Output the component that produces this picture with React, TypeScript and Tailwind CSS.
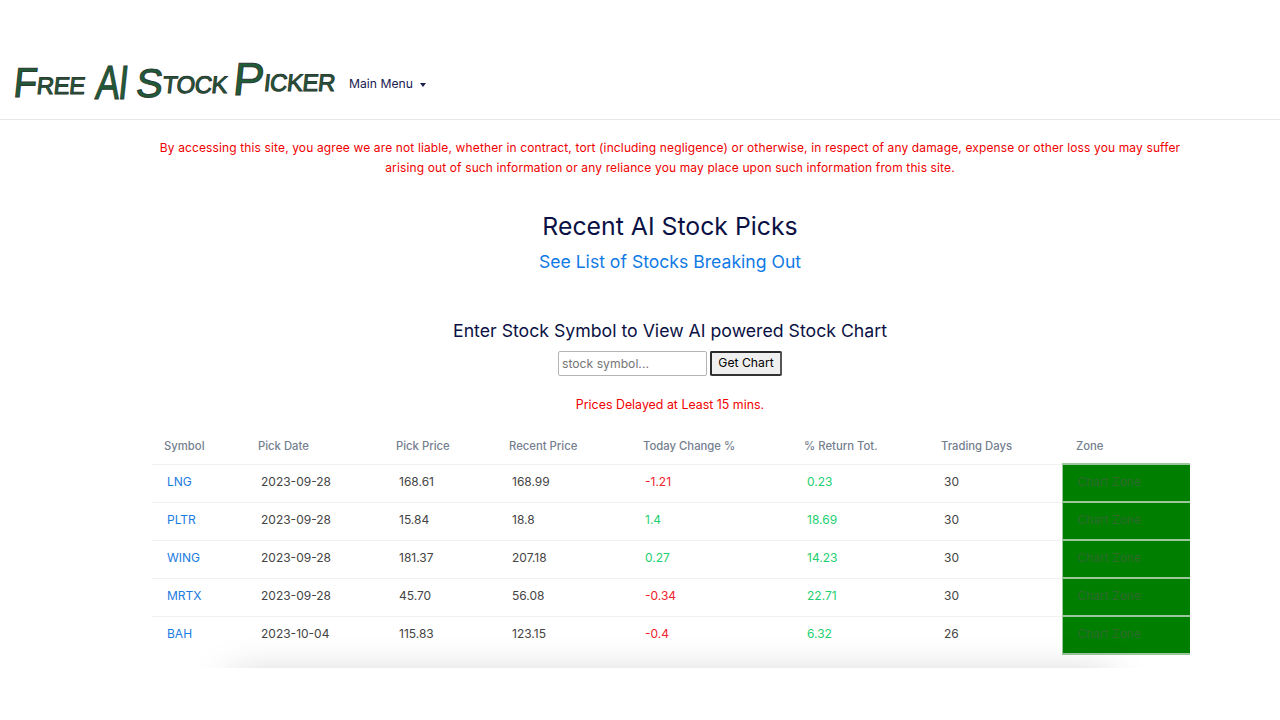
const picks = [
  { symbol: 'LNG', date: '2023-09-28', pick: '168.61', recent: '168.99', today: '-1.21', total: '0.23', days: '30' },
  { symbol: 'PLTR', date: '2023-09-28', pick: '15.84', recent: '18.8', today: '1.4', total: '18.69', days: '30' },
  { symbol: 'WING', date: '2023-09-28', pick: '181.37', recent: '207.18', today: '0.27', total: '14.23', days: '30' },
  { symbol: 'MRTX', date: '2023-09-28', pick: '45.70', recent: '56.08', today: '-0.34', total: '22.71', days: '30' },
  { symbol: 'BAH', date: '2023-10-04', pick: '115.83', recent: '123.15', today: '-0.4', total: '6.32', days: '26' },
]

const headers = [
  { label: 'Symbol', width: 'w-[94px]' },
  { label: 'Pick Date', width: 'w-[138px]' },
  { label: 'Pick Price', width: 'w-[113px]' },
  { label: 'Recent Price', width: 'w-[134px]' },
  { label: 'Today Change %', width: 'w-[161px]' },
  { label: '% Return Tot.', width: 'w-[137px]' },
  { label: 'Trading Days', width: 'w-[133px]' },
  { label: 'Zone', width: 'w-[128px]' },
]

// hand lettered look, still real text
function Logo() {
  return (
    <div className="flex items-center whitespace-nowrap w-[322px] h-[46px] -skew-x-6 text-[#1f5c38] font-['Liberation_Sans',sans-serif] font-normal [-webkit-text-stroke:1px_#2c3a32]">
      <span className="inline-block text-[38px] leading-[46px] scale-y-110">F</span>
      <span className="inline-block text-[24px] leading-[46px] tracking-[-0.5px] mt-[6px]">REE</span>
      <span className="inline-block text-[48px] leading-[46px] ml-[6px] tracking-[-2px] scale-x-75 -mx-[2px]">AI</span>
      <span className="inline-block text-[40px] leading-[46px] ml-[6px]">S</span>
      <span className="inline-block text-[24px] leading-[46px] tracking-[-0.5px] mt-[4px]">TOCK</span>
      <span className="inline-block text-[46px] leading-[46px] ml-[6px] -mt-[8px]">P</span>
      <span className="inline-block text-[24px] leading-[46px] tracking-[-0.5px]">ICKER</span>
    </div>
  )
}

export default function App() {
  return (
    <div className="min-h-[720px] bg-white font-['Inter',sans-serif] text-[#0b1144]">
      {/* Navbar */}
      <div className="h-[120px] border-b border-[#e8e8e8] flex items-center pl-[14px] pt-[47px]">
        <Logo />
        <button className="ml-[13px] mt-[3px] flex items-center text-[12.2px] text-[#1a2050]">
          Main Menu
          <span className="ml-[7px] mt-[2px] w-0 h-0 border-x-[3.5px] border-x-transparent border-t-[4px] border-t-[#1a2050]" />
        </button>
      </div>

      <div className="w-[1040px] ml-[150px]">
        <p className="pt-[18px] text-center text-[12px] tracking-[0.13px] leading-[20px] text-[#f00000]">
          By accessing this site, you agree we are not liable, whether in contract, tort (including negligence) or otherwise, in respect of any damage, expense or other loss you may suffer
          <br />
          arising out of such information or any reliance you may place upon such information from this site.
        </p>

        <h1 className="mt-[31px] text-center text-[24.8px] leading-[34px] text-[#0b1144]">Recent AI Stock Picks</h1>
        <a className="block mt-[5px] text-center text-[17.6px] leading-[28px] text-[#0f7ae5]">See List of Stocks Breaking Out</a>

        <h2 className="mt-[42px] text-center text-[17.7px] leading-[26px] text-[#0b1144]">Enter Stock Symbol to View AI powered Stock Chart</h2>
        <div className="mt-[7px] flex justify-center gap-[3px]">
          <input
            placeholder="stock symbol..."
            className="w-[149px] h-[25px] px-[3px] pb-[1px] border border-[#b5b5b5] rounded-[2px] text-[12.2px] placeholder:text-[#757575] outline-none"
          />
          <button className="w-[72px] h-[25px] bg-[#efefef] border-2 border-[#2b2b2b] border-r-[#555] border-b-[#333] rounded-[2px] text-[12.2px] text-black">
            Get Chart
          </button>
        </div>
        <p className="mt-[20px] text-center text-[12.4px] leading-[18px] text-[#f00000]">Prices Delayed at Least 15 mins.</p>

        {/* Picks table, the faded shadow comes from a box cut off below it */}
        <div className="mt-[14px] h-[240px] overflow-hidden">
          <div className="ml-[2px] w-[1038px]">
            <table className="w-[1038px] table-fixed border-collapse text-[12px]">
              <thead>
                <tr className="h-[36px]">
                  {headers.map((h) => (
                    <th
                      key={h.label}
                      className={`${h.width} text-left font-medium text-[11.3px] pt-[2px] text-[#75808f] pl-[12px] last:pl-[14px] whitespace-nowrap`}
                    >
                      {h.label}
                    </th>
                  ))}
                </tr>
              </thead>
              <tbody>
                {picks.map((p) => (
                  <tr key={p.symbol} className="h-[38px] border-t border-[#f1f1f1] text-[#444]">
                    <td className="pl-[15px] pb-[2px] text-[#1a7be0]">{p.symbol}</td>
                    <td className="pl-[15px] pb-[2px]">{p.date}</td>
                    <td className="pl-[15px] pb-[2px]">{p.pick}</td>
                    <td className="pl-[15px] pb-[2px]">{p.recent}</td>
                    <td className={`pl-[14px] pb-[2px] ${p.today.startsWith('-') ? 'text-[#f0242c]' : 'text-[#22cf70]'}`}>{p.today}</td>
                    <td className="pl-[15px] pb-[2px] text-[#22cf70]">{p.total}</td>
                    <td className="pl-[15px] pb-[2px]">{p.days}</td>
                    <td className="pl-[15px] pb-[2px] bg-[#007e00] border-y-2 border-x border-[#9cc79c] text-[#2e6a2e]">Chart Zone</td>
                  </tr>
                ))}
              </tbody>
            </table>
            <div className="relative mx-[80px] h-[30px] mt-[24px] shadow-[0_0_40px_rgba(0,0,0,0.25)]" />
          </div>
        </div>
      </div>
    </div>
  )
}
